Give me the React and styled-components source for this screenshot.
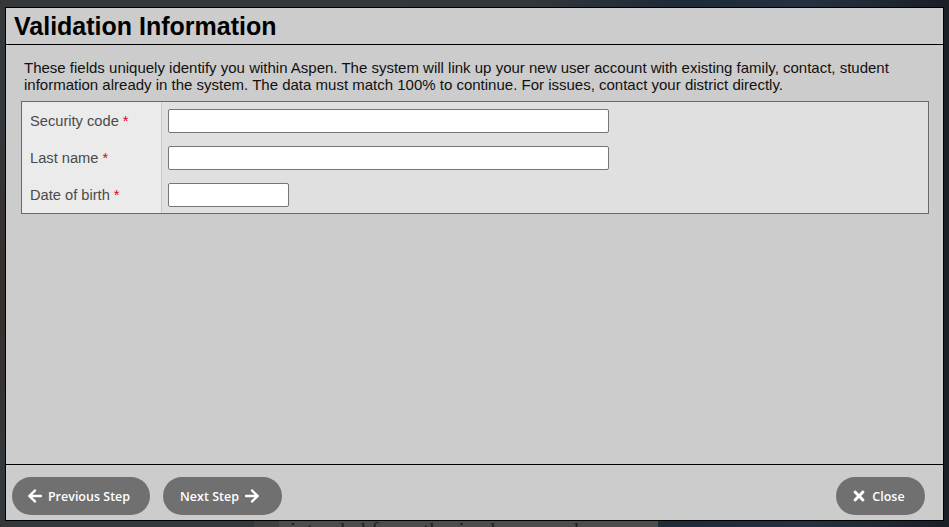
import React from "react"
import styled, { createGlobalStyle } from "styled-components"
import { FaArrowLeft, FaArrowRight, FaTimes } from "react-icons/fa"

const GlobalStyle = createGlobalStyle`
    html, body {
        margin: 0;
        padding: 0;
        overflow: hidden;
    }
    body {
        background: #2c2f33;
        font-family: "Liberation Sans", Arial, sans-serif;
    }
`

const Backdrop = styled.div`
    position: relative;
    width: 949px;
    height: 527px;
    overflow: hidden;
    background:
        radial-gradient(ellipse at 20% 55%, #3a2a26 0%, rgba(58, 42, 38, 0) 45%),
        linear-gradient(90deg, #34383b 0%, #33373a 55%, #1d2a38 72%, #253140 85%, #1a1f26 100%);
    display: flex;
    flex-direction: column;
    justify-content: flex-end;
    align-items: flex-start;
`

const PagePanel = styled.div`
    box-sizing: border-box;
    width: 404px;
    height: 20px;
    margin-left: 254px;
    margin-bottom: -13px;
    background: #4c4c4c;
    border-left: 25px solid #404040;
    padding-left: 11px;
    font-family: "Liberation Serif", "Times New Roman", serif;
    font-size: 22px;
    color: #1e1e1e;
    line-height: 20px;
    white-space: nowrap;
`

const Dialog = styled.div`
    position: absolute;
    left: 5px;
    top: 7px;
    width: 937px;
    height: 512px;
    border: 1px solid #000;
    background: #cccccc;
    display: flex;
    flex-direction: column;
`

const Header = styled.div`
    height: 36px;
    border-bottom: 1px solid #000;
    padding: 0 8px;
    display: flex;
    align-items: center;
`

const Title = styled.h1`
    margin: 0;
    font-size: 25px;
    font-weight: bold;
    color: #000;
`

const Body = styled.div`
    flex: 1;
    padding: 14px 14px 0 15px;
`

const Intro = styled.p`
    margin: 0 0 8px;
    padding: 0 3px;
    font-size: 15px;
    line-height: 17px;
    color: #111;
`

const FieldTable = styled.div`
    border: 1px solid #6a6a6a;
    background: #e0e0e0;
    display: grid;
    grid-template-columns: 140px 1fr;
`

const LabelColumn = styled.div`
    background: #ebebeb;
    border-right: 1px solid #c8c8c8;
    padding: 7px 0 6px;
    display: flex;
    flex-direction: column;
    gap: 13px;
`

const InputColumn = styled.div`
    padding: 7px 6px 6px;
    display: flex;
    flex-direction: column;
    gap: 13px;
`

const Label = styled.div`
    height: 24px;
    padding-left: 8px;
    display: flex;
    align-items: center;
    font-size: 14.667px;
    color: #4a4a4a;
`

const Required = styled.span`
    color: #e0001b;
    margin-left: 4px;
`

const TextInput = styled.input`
    box-sizing: border-box;
    width: ${(p) => p.$width}px;
    height: 24px;
    border: 1px solid #767676;
    border-radius: 2px;
    background: #fff;
    padding: 1px 4px;
    font-size: 14px;
`

const Footer = styled.div`
    height: 56px;
    border-top: 1px solid #000;
    padding: 12px 18px 0 6px;
    box-sizing: border-box;
    display: flex;
    align-items: flex-start;
    gap: 13px;
`

const Button = styled.button`
    height: 38px;
    width: ${(p) => p.$width}px;
    border: none;
    border-radius: 19px;
    background: #707070;
    color: #fff;
    font-family: "Open Sans", sans-serif;
    font-weight: 600;
    font-size: 12.5px;
    display: flex;
    align-items: center;
    justify-content: center;
    gap: 5px;
    padding: 0 5px 0 0;
    margin-left: ${(p) => (p.$push ? "auto" : "0")};
    svg {
        font-size: 16px;
    }
`

const fields = [
    { label: "Security code", width: 441 },
    { label: "Last name", width: 441 },
    { label: "Date of birth", width: 121 },
]

export default function App() {
    return (
        <>
            <GlobalStyle />
            <Backdrop>
                <PagePanel>intended for authorized users only.</PagePanel>
                <Dialog>
                    <Header>
                        <Title>Validation Information</Title>
                    </Header>
                    <Body>
                        <Intro>
                            These fields uniquely identify you within Aspen. The system will link up your new user account with existing family, contact, student information already in the system. The data must match 100% to continue. For issues, contact your district directly.
                        </Intro>
                        <FieldTable>
                            <LabelColumn>
                                {fields.map((f) => (
                                    <Label key={f.label}>
                                        {f.label}
                                        <Required>*</Required>
                                    </Label>
                                ))}
                            </LabelColumn>
                            <InputColumn>
                                {fields.map((f) => (
                                    <TextInput key={f.label} type="text" $width={f.width} />
                                ))}
                            </InputColumn>
                        </FieldTable>
                    </Body>
                    <Footer>
                        <Button $width={138}>
                            <FaArrowLeft />
                            Previous Step
                        </Button>
                        <Button $width={119}>
                            Next Step
                            <FaArrowRight />
                        </Button>
                        <Button $width={89} $push>
                            <FaTimes />
                            Close
                        </Button>
                    </Footer>
                </Dialog>
            </Backdrop>
        </>
    )
}
